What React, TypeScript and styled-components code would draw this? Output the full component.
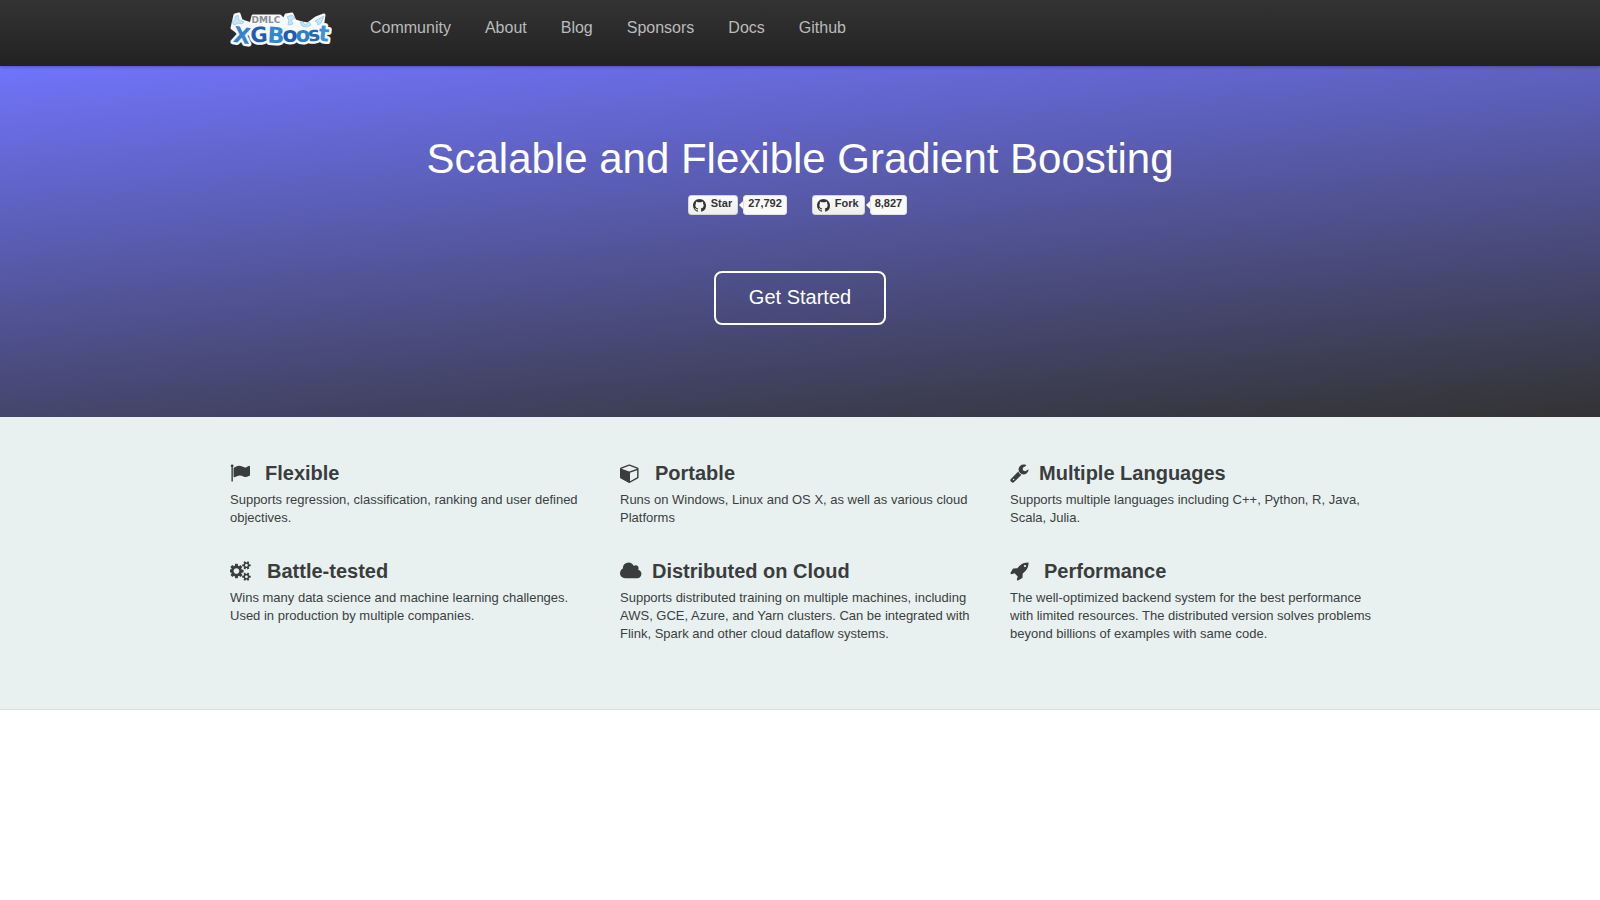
import React from 'react';
import styled, { createGlobalStyle } from 'styled-components';

const GlobalStyle = createGlobalStyle`
  * { box-sizing: border-box; }
  body {
    margin: 0;
    background: #fff;
    color: #3a4040;
    font: 13px/18px "Liberation Sans", Arial, sans-serif;
  }
`;

const Container = styled.div`
  max-width: 1170px;
  margin: 0 auto;
  padding: 0 15px;
`;

const Header = styled.header`
  position: relative;
  height: 66px;
  background: linear-gradient(#333, #222);
  box-shadow: 0 1px 3px rgba(0, 0, 0, 0.25);
`;

const NavBar = styled(Container)`
  display: flex;
  align-items: flex-start;
`;

const Brand = styled.a`
  display: block;
  width: 102px;
  height: 36px;
  margin-top: 12px;

  svg { display: block; }
`;

const Nav = styled.nav`
  display: flex;
  gap: 34px;
  margin-left: 38px;
  padding-top: 18px;
`;

const NavLink = styled.a`
  color: #bbb;
  font-size: 16px;
  line-height: 20px;
  text-decoration: none;
`;

const Hero = styled.section`
  display: flex;
  flex-direction: column;
  align-items: center;
  padding: 68px 15px 92px;
  color: #fff;
  background: linear-gradient(175deg, #7074fa 0%, #333 100%);
`;

const Title = styled.h1`
  margin: 0;
  font-size: 42px;
  line-height: 50px;
  font-weight: 400;
`;

const Buttons = styled.div`
  display: flex;
  gap: 25px;
  margin: 11px 0 56px;
  padding-right: 5px;
`;

const Pair = styled.div`
  display: flex;
  gap: 5px;
  font-weight: 700;
  font-size: 11px;
  line-height: 14px;
`;

const GithubLink = styled.a`
  display: flex;
  gap: 5px;
  height: 20px;
  padding: 0 5px 0 4px;
  border: 1px solid #d4d4d4;
  border-radius: 3px;
  background: linear-gradient(#fcfcfc, #eee);
  color: #333;
  text-decoration: none;

  svg { margin-top: 3px; }
`;

const Count = styled.a`
  position: relative;
  height: 20px;
  padding: 0 4px;
  border: 1px solid #e4e4e4;
  border-radius: 3px;
  background: #fafafa;
  color: #333;
  text-decoration: none;

  &::before {
    content: "";
    position: absolute;
    left: -5px;
    top: 5px;
    border: solid transparent;
    border-width: 4px 4px 4px 0;
    border-right-color: #fafafa;
  }
`;

const StartButton = styled.button`
  width: 172px;
  height: 54px;
  padding: 0 0 2px;
  border: 2px solid #fff;
  border-radius: 8px;
  background: transparent;
  color: #fff;
  font: 20px/24px "Liberation Sans", Arial, sans-serif;
`;

const Features = styled.section`
  padding: 44px 0 66px;
  border-bottom: 1px solid #dcdfe2;
  background: #e9f1f0;
`;

const Grid = styled(Container)`
  display: grid;
  grid-template-columns: repeat(3, 1fr);
  gap: 32px 20px;
  padding-right: 5px;
`;

const FeatureTitle = styled.h2<{ $gap: number }>`
  display: flex;
  align-items: center;
  gap: ${(p) => p.$gap}px;
  margin: 0 0 6px;
  font-size: 20px;
  line-height: 24px;
  font-weight: 700;
  color: #3a3d3d;
`;

const FeatureText = styled.p`
  margin: 0;
`;

interface Feature {
  title: string;
  text: string;
  gap: number;
  width: number;
  box: string;
  path: string;
}

const features: Feature[] = [
  {
    title: 'Flexible', gap: 15, width: 20, box: '0 0 1792 1792',
    text: 'Supports regression, classification, ranking and user defined objectives.',
    path: 'M320 256q0 72-64 110v1266q0 13-9.5 22.5t-22.5 9.5h-64q-13 0-22.5-9.5t-9.5-22.5v-1266q-64-38-64-110 0-53 37.5-90.5t90.5-37.5 90.5 37.5 37.5 90.5zm1472 64v763q0 25-12.5 38.5t-39.5 27.5q-215 116-369 116-61 0-123.5-22t-108.5-48-115.5-48-142.5-22q-192 0-464 146-17 9-33 9-26 0-45-19t-19-45v-742q0-32 31-55 21-14 79-43 236-120 421-120 107 0 200 29t219 88q38 19 88 19 54 0 117.5-21t110-47 88-47 54.5-21q26 0 45 19t19 45z',
  },
  {
    title: 'Portable', gap: 15, width: 20, box: '0 0 1792 1792',
    text: 'Runs on Windows, Linux and OS X, as well as various cloud Platforms',
    path: 'M896 1629l640-349v-636l-640 233v752zm-64-865l698-254-698-254-698 254zm832-252v768q0 35-18 65t-49 47l-704 384q-28 16-61 16t-61-16l-704-384q-31-17-49-47t-18-65v-768q0-40 23-73t61-47l704-256q22-8 44-8t44 8l704 256q38 14 61 47t23 73z',
  },
  {
    title: 'Multiple Languages', gap: 10, width: 19, box: '64 0 1702 1792',
    text: 'Supports multiple languages including C++, Python, R, Java, Scala, Julia.',
    path: 'M448 1472q0-26-19-45t-45-19-45 19-19 45 19 45 45 19 45-19 19-45zm644-420l-682 682q-37 37-90 37-52 0-91-37l-106-108q-38-36-38-90 0-53 38-91l681-681q39 98 114.5 173.5t173.5 114.5zm634-435q0 39-23 106-47 134-164.5 217.5t-258.5 83.5q-185 0-316.5-131.5t-131.5-316.5 131.5-316.5 316.5-131.5q58 0 121.5 16.5t107.5 46.5q16 11 16 28t-16 28l-293 169v224l193 107q5-3 79-48.5t135.5-81 70.5-35.5q15 0 23.5 10t8.5 25z',
  },
  {
    title: 'Battle-tested', gap: 15, width: 22, box: '0 0 1971 1792',
    text: 'Wins many data science and machine learning challenges. Used in production by multiple companies.',
    path: 'M832 896q0-106-75-181t-181-75-181 75-75 181 75 181 181 75 181-75 75-181zm768 512q0-52-38-90t-90-38-90 38-38 90q0 53 37.5 90.5t90.5 37.5 90.5-37.5 37.5-90.5zm0-1024q0-52-38-90t-90-38-90 38-38 90q0 53 37.5 90.5t90.5 37.5 90.5-37.5 37.5-90.5zm-384 421v185q0 10-7 19.5t-16 10.5l-155 24q-11 35-32 76 34 48 90 115 7 11 7 20 0 12-7 19-23 30-82.5 89.5t-78.5 59.5q-11 0-21-7l-115-90q-37 19-77 31-11 108-23 155-7 24-30 24h-186q-11 0-20-7.5t-10-17.5l-23-153q-34-10-75-31l-118 89q-7 7-20 7-11 0-21-8-144-133-144-160 0-9 7-19 10-14 41-53t47-61q-23-44-35-82l-152-24q-10-1-17-9.5t-7-19.5v-185q0-10 7-19.5t16-10.5l155-24q11-35 32-76-34-48-90-115-7-11-7-20 0-12 7-20 22-30 82-89t79-59q11 0 21 7l115 90q34-18 77-32 11-108 23-154 7-24 30-24h186q11 0 20 7.5t10 17.5l23 153q34 10 75 31l118-89q8-7 20-7 11 0 21 8 144 133 144 160 0 9-7 19-12 16-42 54t-45 60q23 48 34 82l152 23q10 2 17 10.5t7 19.5zm640 533v140q0 16-149 31-12 27-30 52 51 113 51 138 0 4-4 7-122 71-124 71-8 0-46-47t-52-68q-20 2-30 2t-30-2q-14 21-52 68t-46 47q-2 0-124-71-4-3-4-7 0-25 51-138-18-25-30-52-149-15-149-31v-140q0-16 149-31 13-29 30-52-51-113-51-138 0-4 4-7 4-2 35-20t59-34 30-16q8 0 46 46.5t52 67.5q20-2 30-2t30 2q51-71 92-112l6-2q4 0 124 70 4 3 4 7 0 25-51 138 17 23 30 52 149 15 149 31zm0-1024v140q0 16-149 31-12 27-30 52 51 113 51 138 0 4-4 7-122 71-124 71-8 0-46-47t-52-68q-20 2-30 2t-30-2q-14 21-52 68t-46 47q-2 0-124-71-4-3-4-7 0-25 51-138-18-25-30-52-149-15-149-31v-140q0-16 149-31 13-29 30-52-51-113-51-138 0-4 4-7 4-2 35-20t59-34 30-16q8 0 46 46.5t52 67.5q20-2 30-2t30 2q51-71 92-112l6-2q4 0 124 70 4 3 4 7 0 25-51 138 17 23 30 52 149 15 149 31z',
  },
  {
    title: 'Distributed on Cloud', gap: 10, width: 22, box: '64 0 1971 1792',
    text: 'Supports distributed training on multiple machines, including AWS, GCE, Azure, and Yarn clusters. Can be integrated with Flink, Spark and other cloud dataflow systems.',
    path: 'M1984 1152q0 159-112.5 271.5t-271.5 112.5h-1088q-185 0-316.5-131.5t-131.5-316.5q0-132 71-241.5t187-163.5q-2-28-2-43 0-212 150-362t362-150q158 0 286.5 88t187.5 230q70-62 166-62 106 0 181 75t75 181q0 75-41 138 129 30 213 134.5t84 239.5z',
  },
  {
    title: 'Performance', gap: 15, width: 19, box: '0 0 1702 1792',
    text: 'The well-optimized backend system for the best performance with limited resources. The distributed version solves problems beyond billions of examples with same code.',
    path: 'M1440 448q0-40-28-68t-68-28-68 28-28 68 28 68 68 28 68-28 28-68zm224-288q0 249-75.5 430.5t-253.5 360.5q-81 80-195 176l-20 379q-2 16-16 26l-384 224q-7 4-16 4-12 0-23-9l-64-64q-13-14-8-32l85-276-281-281-276 85q-3 1-9 1-14 0-23-9l-64-64q-17-19-5-39l224-384q10-14 26-16l379-20q96-114 176-195 188-187 358-258t431-71q14 0 24 9.5t10 22.5z',
  },
];

const navItems = ['Community', 'About', 'Blog', 'Sponsors', 'Docs', 'Github'];

// Letters of the wordmark: glyph, x, baseline, size, tilt, colour
const letters: [string, number, number, number, number, string][] = [
  ['X', 12, 31, 22, 8, '#3583cf'],
  ['G', 29, 30, 21, -3, '#1d5fae'],
  ['B', 46, 31, 22, 3, '#2f86d2'],
  ['o', 60, 30, 22, 0, '#1d5fae'],
  ['o', 73, 30, 21, 0, '#2f7fcc'],
  ['s', 84, 29, 20, -6, '#2469b4'],
  ['t', 94, 29, 22, 6, '#3c93dc'],
];

function Wordmark() {
  const word = letters.map(([c, x, y, size, tilt, fill], i) => (
    <text key={i} x={x} y={y} fontSize={size} fill={fill} textAnchor="middle" transform={`rotate(${tilt} ${x} ${y - 7})`}>{c}</text>
  ));
  return (
    <svg width="102" height="36" viewBox="0 0 102 36" role="img" aria-label="DMLC XGBoost" fontFamily="DejaVu Sans, sans-serif" fontWeight="700">
      <g fill="#f7fbfe" stroke="#f7fbfe" strokeWidth="3" strokeLinejoin="round">
        <path d="M5 3l4-1 2 6 4 2 6 2 2-8 27 0 4 4 2-5 6-1 3 7 7 2 6 1 8-6 8-3-1 7-3 6-10 6-70 0-8-6z" />
      </g>
      <g stroke="#f7fbfe" strokeWidth="5" strokeLinejoin="round">{word}</g>
      <g fill="#c4e6f8" stroke="#9fd3f0" strokeWidth="1" strokeLinejoin="round">
        <path d="M5 5l3-2 1 5 5 2-2 2-4-1-4 2-2-3 3-2z" />
        <path d="M57 5l5-2 3 3-4 2 2 4-5 1 1-5z" />
        <path d="M70 10l3 0 2 3 4-3 2 3-4 2-5-1z" />
        <path d="M85 9l9-5-3 7-3 2-1-3z" />
      </g>
      <text x="36" y="11" textAnchor="middle" fontSize="9" fill="#8d8d92">DMLC</text>
      <g>{word}</g>
    </svg>
  );
}

function GithubMark() {
  return (
    <svg width="13" height="13" viewBox="0 0 16 16" fill="#333" aria-hidden="true">
      <path d="M8 0C3.58 0 0 3.58 0 8c0 3.54 2.29 6.53 5.47 7.59.4.07.55-.17.55-.38 0-.19-.01-.82-.01-1.49-2.01.37-2.53-.49-2.69-.94-.09-.23-.48-.94-.82-1.13-.28-.15-.68-.52-.01-.53.63-.01 1.08.58 1.23.82.72 1.21 1.87.87 2.33.66.07-.52.28-.87.51-1.07-1.78-.2-3.64-.89-3.64-3.95 0-.87.31-1.59.82-2.15-.08-.2-.36-1.02.08-2.12 0 0 .67-.21 2.2.82.64-.18 1.32-.27 2-.27s1.36.09 2 .27c1.53-1.04 2.2-.82 2.2-.82.44 1.1.16 1.92.08 2.12.51.56.82 1.27.82 2.15 0 3.07-1.87 3.75-3.65 3.95.29.25.54.73.54 1.48 0 1.07-.01 1.93-.01 2.2 0 .21.15.46.55.38A8.01 8.01 0 0 0 16 8c0-4.42-3.58-8-8-8z" />
    </svg>
  );
}

function GithubButton({ label, count }: { label: string; count: string }) {
  return (
    <Pair>
      <GithubLink href="#"><GithubMark />{label}</GithubLink>
      <Count href="#">{count}</Count>
    </Pair>
  );
}

export default function App() {
  return (
    <>
      <GlobalStyle />
      <Header>
        <NavBar>
          <Brand href="#"><Wordmark /></Brand>
          <Nav>
            {navItems.map((item) => <NavLink key={item} href="#">{item}</NavLink>)}
          </Nav>
        </NavBar>
      </Header>
      <main>
        <Hero>
          <Title>Scalable and Flexible Gradient Boosting</Title>
          <Buttons>
            <GithubButton label="Star" count="27,792" />
            <GithubButton label="Fork" count="8,827" />
          </Buttons>
          <StartButton type="button">Get Started</StartButton>
        </Hero>
        <Features>
          <Grid>
            {features.map((f) => (
              <article key={f.title}>
                <FeatureTitle $gap={f.gap}>
                  <svg width={f.width} height="20" viewBox={f.box} preserveAspectRatio="xMinYMid" fill="currentColor" aria-hidden="true">
                    <path d={f.path} />
                  </svg>
                  {f.title}
                </FeatureTitle>
                <FeatureText>{f.text}</FeatureText>
              </article>
            ))}
          </Grid>
        </Features>
      </main>
    </>
  );
}
